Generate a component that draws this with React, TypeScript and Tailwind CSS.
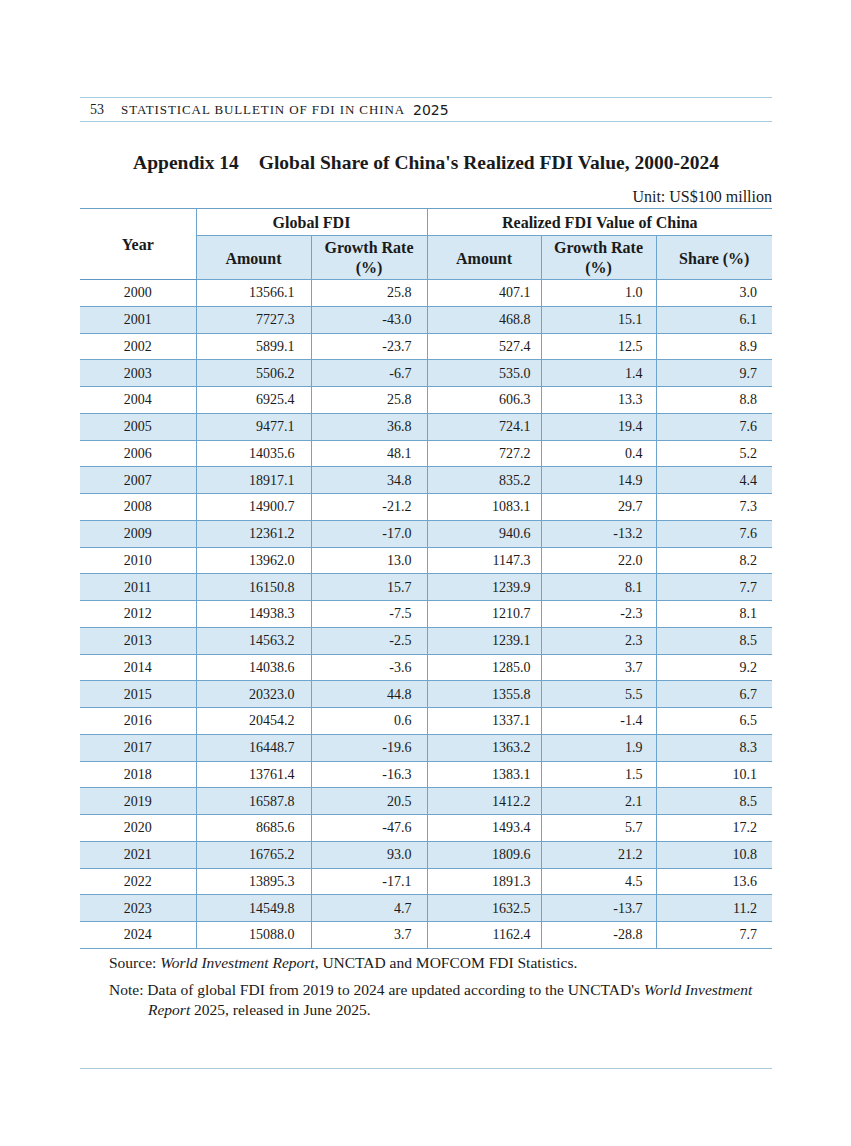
import React from "react";

const rows: [string, string, string, string, string, string][] = [
  ["2000", "13566.1", "25.8", "407.1", "1.0", "3.0"],
  ["2001", "7727.3", "-43.0", "468.8", "15.1", "6.1"],
  ["2002", "5899.1", "-23.7", "527.4", "12.5", "8.9"],
  ["2003", "5506.2", "-6.7", "535.0", "1.4", "9.7"],
  ["2004", "6925.4", "25.8", "606.3", "13.3", "8.8"],
  ["2005", "9477.1", "36.8", "724.1", "19.4", "7.6"],
  ["2006", "14035.6", "48.1", "727.2", "0.4", "5.2"],
  ["2007", "18917.1", "34.8", "835.2", "14.9", "4.4"],
  ["2008", "14900.7", "-21.2", "1083.1", "29.7", "7.3"],
  ["2009", "12361.2", "-17.0", "940.6", "-13.2", "7.6"],
  ["2010", "13962.0", "13.0", "1147.3", "22.0", "8.2"],
  ["2011", "16150.8", "15.7", "1239.9", "8.1", "7.7"],
  ["2012", "14938.3", "-7.5", "1210.7", "-2.3", "8.1"],
  ["2013", "14563.2", "-2.5", "1239.1", "2.3", "8.5"],
  ["2014", "14038.6", "-3.6", "1285.0", "3.7", "9.2"],
  ["2015", "20323.0", "44.8", "1355.8", "5.5", "6.7"],
  ["2016", "20454.2", "0.6", "1337.1", "-1.4", "6.5"],
  ["2017", "16448.7", "-19.6", "1363.2", "1.9", "8.3"],
  ["2018", "13761.4", "-16.3", "1383.1", "1.5", "10.1"],
  ["2019", "16587.8", "20.5", "1412.2", "2.1", "8.5"],
  ["2020", "8685.6", "-47.6", "1493.4", "5.7", "17.2"],
  ["2021", "16765.2", "93.0", "1809.6", "21.2", "10.8"],
  ["2022", "13895.3", "-17.1", "1891.3", "4.5", "13.6"],
  ["2023", "14549.8", "4.7", "1632.5", "-13.7", "11.2"],
  ["2024", "15088.0", "3.7", "1162.4", "-28.8", "7.7"],
];

export default function App() {
  return (
    <div
      className="w-[851px] h-[1146px] bg-white text-[#1a1a1a] overflow-hidden"
      style={{ fontFamily: '"Liberation Serif", "Times New Roman", serif' }}
    >
      <div className="ml-[80px] w-[692px] pt-[97px]">
        {/* running header */}
        <div className="h-[25px] border-t border-b border-[#a9cde0] flex items-center pl-[10px] text-[13px] leading-none">
          <span className="text-[14px]">53</span>
          <span className="ml-[17px] tracking-[0.9px]">STATISTICAL BULLETIN OF FDI IN CHINA</span>
          <span
            className="ml-[8px] text-[14px]"
            style={{ fontFamily: '"DejaVu Sans", "Liberation Sans", sans-serif' }}
          >
            2025
          </span>
        </div>

        {/* title */}
        <div className="mt-[29px] text-center text-[19.5px] font-bold leading-[24px]">
          Appendix 14<span className="inline-block w-[20px]" />Global Share of China's Realized FDI Value, 2000-2024
        </div>

        {/* unit */}
        <div className="mt-[12px] text-right text-[16px] leading-[20px]">Unit: US$100 million</div>

        {/* table */}
        <table className="mt-[1px] w-[692px] table-fixed border-collapse text-[14px]">
          <colgroup>
            <col className="w-[116px]" />
            <col className="w-[115px]" />
            <col className="w-[116px]" />
            <col className="w-[114px]" />
            <col className="w-[115px]" />
            <col className="w-[116px]" />
          </colgroup>
          <thead>
            <tr className="h-[27px] border-t border-[#6a9fc6]">
              <th rowSpan={2} className="font-bold text-[16px] align-middle pt-[2px] border-b border-[#5f97c2]">
                Year
              </th>
              <th colSpan={2} className="font-bold text-[16px] border-l border-b border-[#6fa5cc] leading-[18px] pt-[2px]">
                Global FDI
              </th>
              <th colSpan={3} className="font-bold text-[16px] border-l border-b border-[#6fa5cc] leading-[18px] pt-[2px]">
                Realized FDI Value of China
              </th>
            </tr>
            <tr className="h-[44px] bg-[#d6e8f3]">
              <th className="font-bold text-[16px] border-l border-b border-[#6fa5cc] leading-[20px] pt-[2px]">Amount</th>
              <th className="font-bold text-[16px] border-l border-b border-[#6fa5cc] leading-[20px]">
                Growth Rate
                <br />
                (%)
              </th>
              <th className="font-bold text-[16px] border-l border-b border-[#6fa5cc] leading-[20px] pt-[2px]">Amount</th>
              <th className="font-bold text-[16px] border-l border-b border-[#6fa5cc] leading-[20px]">
                Growth Rate
                <br />
                (%)
              </th>
              <th className="font-bold text-[16px] border-l border-b border-[#6fa5cc] leading-[20px] pt-[2px]">Share (%)</th>
            </tr>
          </thead>
          <tbody>
            {rows.map((r, i) => (
              <tr key={r[0]} className={`h-[26.76px] ${i % 2 === 1 ? "bg-[#d6e8f3]" : "bg-white"}`}>
                <td className="text-center border-b border-[#6fa5cc] leading-[18px] pt-[1px]">{r[0]}</td>
                <td className="text-right pr-[16px] border-l border-b border-[#6fa5cc] leading-[18px] pt-[1px]">{r[1]}</td>
                <td className="text-right pr-[15px] border-l border-b border-[#6fa5cc] leading-[18px] pt-[1px]">{r[2]}</td>
                <td className="text-right pr-[10px] border-l border-b border-[#6fa5cc] leading-[18px] pt-[1px]">{r[3]}</td>
                <td className="text-right pr-[13px] border-l border-b border-[#6fa5cc] leading-[18px] pt-[1px]">{r[4]}</td>
                <td className="text-right pr-[15px] border-l border-b border-[#6fa5cc] leading-[18px] pt-[1px]">{r[5]}</td>
              </tr>
            ))}
          </tbody>
        </table>

        {/* notes */}
        <div className="mt-[4px] pl-[29px] text-[15.5px] leading-[20px]">
          <p>
            Source: <i>World Investment Report</i>, UNCTAD and MOFCOM FDI Statistics.
          </p>
          <p className="mt-[7px] pl-[39px] -indent-[39px]">
            Note: Data of global FDI from 2019 to 2024 are updated according to the UNCTAD's <i>World Investment</i>
            <br />
            <i>Report</i> 2025, released in June 2025.
          </p>
        </div>
      </div>

      <div className="ml-[80px] w-[692px] mt-[48px] border-t border-[#a9c8d8]" />
    </div>
  );
}
